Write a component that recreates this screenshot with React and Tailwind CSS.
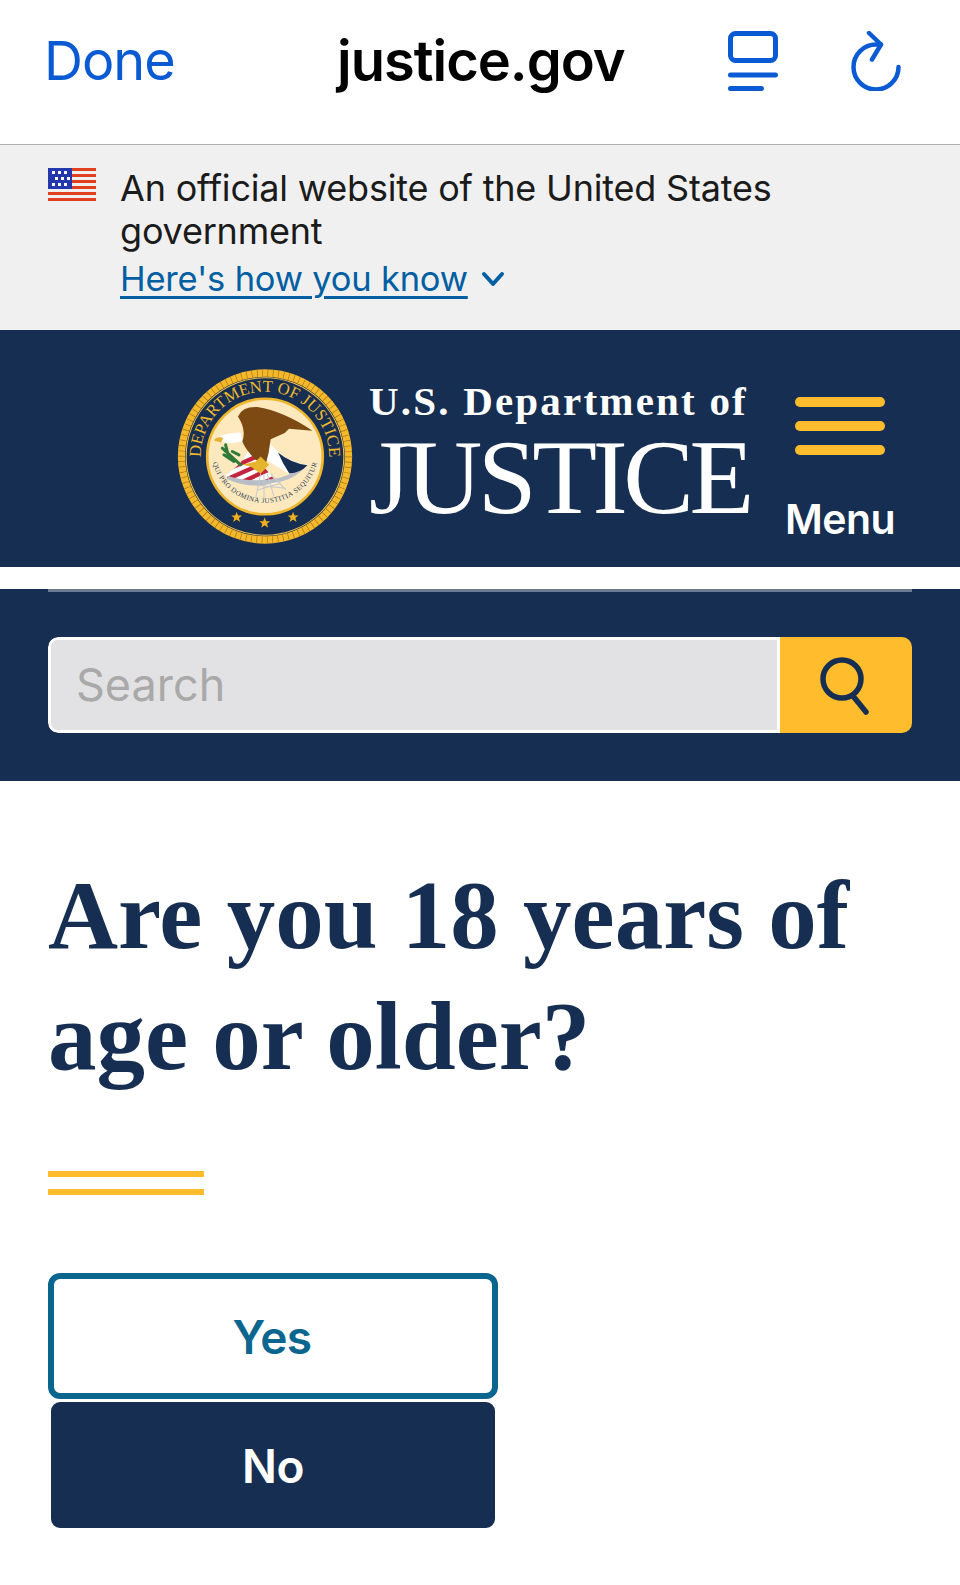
const sans = { fontFamily: 'Inter, "Liberation Sans", sans-serif' };

const TabsIcon = () => (
  <svg width="50" height="60" viewBox="0 0 50 60" fill="none" stroke="#0a5bd3" strokeWidth="5" strokeLinecap="round">
    <rect x="2.5" y="2.5" width="45" height="27" rx="5" />
    <path d="M2.5 44h45M2.5 57.500h31" />
  </svg>
);

const ReloadIcon = () => (
  <svg width="50" height="60" viewBox="0 0 50 60" fill="none" stroke="#0a5bd3" strokeWidth="4.500" strokeLinecap="round" strokeLinejoin="round">
    <path d="M47.500 36a22.500 22.500 0 1 1-22.500-22.500h5" />
    <path d="M18 2l12 11.500-9 15" />
  </svg>
);

const Flag = () => (
  <svg width="48" height="33" viewBox="0 0 48 33" className="shrink-0">
    <rect width="48" height="33" fill="#f0f0f0" />
    {[0, 6, 12, 18, 24, 30].map((y) => <rect key={y} y={y} width="48" height="3" fill="#e23f1f" />)}
    <rect width="24" height="21" fill="#2438ad" />
    {[[4, 3], [10, 3], [16, 3], [7, 9], [13, 9], [19, 9], [4, 15], [10, 15], [16, 15]].map(([x, y]) => (
      <rect key={`${x}-${y}`} x={x} y={y} width="3" height="3" fill="#fff" />
    ))}
  </svg>
);

const Star = ({ x, y }) => (
  <polygon
    fill="#f2b01e"
    transform={`translate(${x} ${y})`}
    points="0,-16 4.500,-5 16,-5 7,2 10.500,14 0,7 -10.500,14 -7,2 -16,-5 -4.500,-5"
  />
);

const Seal = () => (
  <svg width="176" height="175" viewBox="50 58 526 524" className="shrink-0">
    <defs>
      <path id="seal-top" d="M127 366a192 192 0 1 1 372 0" />
      <path id="seal-motto" d="M152 315a162 162 0 0 0 322 0" />
      <clipPath id="shield">
        <path d="M195 375Q240 350 265 300L305 345L350 400Q260 415 200 385Z" />
      </clipPath>
    </defs>
    <circle cx="313" cy="320" r="250" fill="none" stroke="#f3b82c" strokeWidth="22" />
    <circle cx="313" cy="320" r="250" fill="none" stroke="#a8740f" strokeWidth="22" strokeDasharray="2 14" />
    <circle cx="313" cy="320" r="236" fill="none" stroke="#f0c04a" strokeWidth="3" />
    <circle cx="313" cy="320" r="173" fill="#fde9bd" stroke="#eeb52c" strokeWidth="8" />
    <text fill="#efb92f" fontSize="50" style={{ fontFamily: '"Liberation Serif", serif' }}>
      <textPath href="#seal-top" startOffset="50%" textAnchor="middle">DEPARTMENT OF JUSTICE</textPath>
    </text>
    <text fill="#2b3f5c" fontSize="21" letterSpacing="1.500" style={{ fontFamily: '"Liberation Serif", serif' }}>
      <textPath href="#seal-motto" startOffset="50%" textAnchor="middle">QUI PRO DOMINA JUSTITIA SEQUITUR</textPath>
    </text>
    <path d="M195 375Q240 350 265 300L305 345L350 400Q260 415 200 385Z" fill="#fff" />
    <g clipPath="url(#shield)" stroke="#c2253f" strokeWidth="13">
      <path d="M185 365L300 315M190 392L320 335M225 405L345 350M280 412L360 375" />
    </g>
    <path d="M200 388Q270 420 345 398Q400 392 440 345L428 345Q385 385 330 388Q260 398 200 378Z" fill="#b9bec6" />
    <path d="M328 280Q370 335 440 345Q420 368 385 372Q345 350 318 330Z" fill="#fff" />
    <path d="M352 308Q390 340 440 346Q420 368 386 371Q365 340 352 308Z" fill="#162e51" />
    <path d="M232 200Q245 170 290 172Q370 185 455 243L385 237L372 250L330 268Q325 310 315 345L285 330Q255 300 245 275Q258 240 232 200Z" fill="#7c4a12" />
    <path d="M160 270Q180 250 240 248L245 275Q200 285 180 272Z" fill="#fff" />
    <path d="M160 272Q168 258 188 264L182 278Z" fill="#e8b030" />
    <g stroke="#2f7a3a" strokeWidth="9" strokeLinecap="round">
      <path d="M185 295L240 345M195 285L205 325M215 305L235 315M190 315L220 335" />
    </g>
    <path d="M245 345L285 335L300 320L325 345L300 372L270 350Z" fill="#e6b32c" />
    <g stroke="#c3c8cf" strokeWidth="3" fill="none">
      <path d="M300 372L285 445M310 372L310 450M320 372L340 440M330 372L375 420M290 420L360 400M285 405L375 415" />
    </g>
    <Star x={228} y={502} />
    <Star x={312} y={519} />
    <Star x={397} y={502} />
  </svg>
);

const Chevron = () => (
  <svg width="24" height="16" viewBox="0 0 24 16" fill="none" stroke="#005ea2" strokeWidth="4" strokeLinecap="round" strokeLinejoin="round">
    <path d="M3 3l9 10 9-10" />
  </svg>
);

const SearchIcon = () => (
  <svg width="50" height="60" viewBox="0 0 50 60" fill="none" stroke="#162e51" strokeLinecap="round">
    <circle cx="22" cy="24" r="19" strokeWidth="5.500" />
    <path d="M33 41l13 16" strokeWidth="5.500" />
  </svg>
);

export default function App() {
  return (
    <div className="w-[960px] h-[1585px] bg-white overflow-hidden" style={sans}>
      <div className="h-[145px] border-b border-[#b0b0b0] flex items-start pt-[31px] pl-[44px]">
        <span className="w-[163px] text-[54px] leading-[60px] tracking-[-1px] text-[#0a5bd3]">Done</span>
        <span className="w-[521px] pl-[130px] text-[56px] leading-[60px] tracking-[-1px] font-semibold text-black">justice.gov</span>
        <TabsIcon />
        <span className="ml-[73px]"><ReloadIcon /></span>
      </div>

      <div className="h-[185px] bg-[#f0f0f0] flex items-start gap-[24px] pl-12 pt-[23px]">
        <Flag />
        <div className="text-[#1b1b1b] text-[36px] leading-[43px] tracking-[-0.2px]">
          <p className="mt-[-1px]">An official website of the United States government</p>
          <div className="flex items-center gap-[13px] mt-[4px] w-[400px]">
            <a className="text-[34.5px] text-[#005ea2] underline underline-offset-[5px] decoration-[3px] whitespace-nowrap">Here's how you know</a>
            <Chevron />
          </div>
        </div>
      </div>

      <div className="h-[237px] bg-[#162e51] flex items-start pl-[177px]">
        <div className="mt-[39px]"><Seal /></div>
        <div className="ml-[16px] w-[382px] shrink-0 text-white" style={{ fontFamily: '"Liberation Serif", serif' }}>
          <div className="mt-[48px] text-[41px] leading-[46px] font-bold tracking-[2.2px] whitespace-nowrap">U.S. Department of</div>
          <div className="mt-[8px] text-[106px] leading-[92px] tracking-[-4.500px] whitespace-nowrap">JUSTICE</div>
        </div>
        <div className="flex flex-col items-center w-[110px] mt-[67px] ml-[34px]">
          <div className="flex flex-col gap-[14px]">
            <div className="w-[90px] h-[10px] rounded-full bg-[#ffbc2c]" />
            <div className="w-[90px] h-[10px] rounded-full bg-[#ffbc2c]" />
            <div className="w-[90px] h-[10px] rounded-full bg-[#ffbc2c]" />
          </div>
          <span className="mt-[39px] text-[41px] leading-[50px] font-semibold tracking-[-0.5px] text-white">Menu</span>
        </div>
      </div>

      <div className="h-[22px]" />

      <div className="h-[192px] bg-[#162e51] px-12">
        <div className="h-[3px] bg-[#6b7a91]" />
        <div className="mt-[45px] h-[96px] flex rounded-[10px] overflow-hidden">
          <div className="w-[732px] h-full bg-[#e2e2e5] border-[3px] border-white rounded-l-[10px] flex items-center pl-[25px]">
            <span className="text-[45px] text-[#a9a9a9]">Search</span>
          </div>
          <div className="flex-1 bg-[#ffbc2c] flex items-center justify-center pr-[3px]">
            <SearchIcon />
          </div>
        </div>
      </div>

      <div className="px-12">
        <h1 className="mt-[74px] text-[97px] leading-[121px] font-bold text-[#162e51]" style={{ fontFamily: '"Liberation Serif", serif' }}>
          Are you 18 years of<br />age or older?
        </h1>
        <div className="mt-[74px] w-[156px] h-[24px] border-y-[6px] border-[#ffbc2c]" />
        <div className="mt-[78px] w-[450px] flex flex-col items-center gap-[3px]">
          <button className="w-[450px] h-[126px] pt-[2px] pr-[2px] rounded-[12px] border-[6px] border-[#0a668f] bg-white text-[#0a668f] text-[46px] font-semibold tracking-[-0.5px]">Yes</button>
          <button className="w-[444px] h-[126px] pt-[2px] rounded-[9px] bg-[#162e51] text-white text-[46px] font-semibold tracking-[-0.5px]">No</button>
        </div>
      </div>
    </div>
  );
}
